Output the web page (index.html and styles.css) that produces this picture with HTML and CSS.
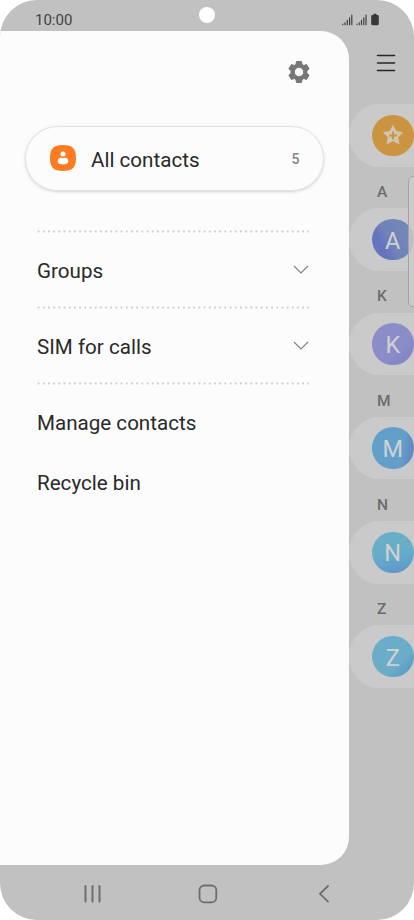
FILE: index.html
```html
<!DOCTYPE html>
<html lang="en">
<head>
<meta charset="utf-8">
<title>Contacts</title>
<link rel="stylesheet" href="styles.css">
</head>
<body>
<div class="phone">
  <header class="status">
    <span class="time">10:00</span>
    <span class="camera"></span>
    <svg class="signals" width="38" height="14" viewBox="0 0 38 14">
      <g stroke="#414141" stroke-width="1.2" stroke-linecap="round">
        <path d="M.8 11.2v.5M3 9.8v1.9M5.3 7.4v4.3M7.6 4.8v6.9M9.8 2v9.7"/>
        <path d="M15 11.2v.5M17.3 9.8v1.9M19.5 7.4v4.3M21.8 4.8v6.9M24 2v9.7"/>
      </g>
      <path fill="#383838" d="M31.500 .8h3v1.100h1.200q1.100 0 1.100 1.100v8.100q0 1.100-1.100 1.100h-5.400q-1.100 0-1.100-1.100V3q0-1.100 1.100-1.100H31.500z"/>
    </svg>
  </header>
  <main class="middle">
    <nav class="drawer">
      <div class="settings">
        <svg width="24" height="24" viewBox="0 0 24 24" fill="#777" fill-rule="evenodd"><path stroke="#777" stroke-width="1" stroke-linejoin="round" d="M9.500 1.500h5l.6 3 1.700 1 2.800-1 2.500 4.300-2.200 2v2.400l2.200 2-2.500 4.300-2.800-1-1.700 1-.6 3h-5l-.6-3-1.700-1-2.800 1-2.500-4.300 2.200-2v-2.400l-2.200-2 2.500-4.300 2.800 1 1.700-1zM12 7.300a4.700 4.700 0 1 0 0 9.400 4.700 4.700 0 0 0 0-9.400z"/></svg>
      </div>
      <div class="all">
        <svg width="26" height="26" viewBox="0 0 26 26"><path fill="#ff7b22" d="M13 0C22.500 0 26 3.500 26 13S22.500 26 13 26 0 22.500 0 13 3.500 0 13 0z"/><circle cx="13" cy="9" r="2.500" fill="#fff"/><path fill="#fff" d="M7.700 16.500c0-2 1.300-3.500 3-3.900q2.300 1.300 4.600 0c1.700.4 3 1.900 3 3.900 0 2-2.700 2.900-5.300 2.900s-5.300-.9-5.300-2.900z"/></svg>
        <span class="all-name">All contacts</span>
        <span class="count">5</span>
      </div>
      <div class="item ruled"><span>Groups</span><svg width="16" height="10" viewBox="0 0 16 10"><path d="M1 1l7 7 7-7" fill="none" stroke="#808080" stroke-width="1.100"/></svg></div>
      <div class="item ruled"><span>SIM for calls</span><svg width="16" height="10" viewBox="0 0 16 10"><path d="M1 1l7 7 7-7" fill="none" stroke="#808080" stroke-width="1.100"/></svg></div>
      <div class="item ruled"><span>Manage contacts</span></div>
      <div class="item last"><span>Recycle bin</span></div>
    </nav>
    <section class="rail">
      <svg class="menu" width="20" height="18" viewBox="0 0 20 18"><path d="M1.500 1.500h17M1.500 9h17M1.500 16.500h17" stroke="#262626" stroke-width="1.600" stroke-linecap="round"/></svg>
      <div class="card"><div class="avatar star"><svg width="22" height="22" viewBox="0 0 22 22"><path fill="#d0c5b1" stroke="#d0c5b1" stroke-linejoin="round" d="M11 1.500l2.900 6.100 6.600.9-4.800 4.600 1.200 6.700-5.900-3.200-5.900 3.200 1.200-6.700L1.500 8.500l6.600-.9z"/><path d="M11 7.500v8M7 11.500h8" stroke="#ca9440" stroke-width="1.900"/></svg></div></div>
      <div class="letter">A</div>
      <div class="card"><div class="avatar a">A</div></div>
      <div class="letter">K</div>
      <div class="card"><div class="avatar k">K</div></div>
      <div class="letter">M</div>
      <div class="card"><div class="avatar m">M</div></div>
      <div class="letter">N</div>
      <div class="card"><div class="avatar n">N</div></div>
      <div class="letter">Z</div>
      <div class="card"><div class="avatar z">Z</div></div>
      <div class="edge"></div>
    </section>
  </main>
  <footer class="navbar">
    <svg width="20" height="20" viewBox="0 0 20 20"><path d="M3.500 2v15.500M10.500 2v15.500M17.500 2v15.500" stroke="#6d6d6d" stroke-width="2" stroke-linecap="round"/></svg>
    <svg width="20" height="20" viewBox="0 0 20 20"><rect x="1.500" y="1.500" width="16.800" height="16.800" rx="4.800" fill="none" stroke="#6d6d6d" stroke-width="1.800"/></svg>
    <svg width="20" height="20" viewBox="0 0 20 20"><path d="M14 2L6 9.800l8 7.800" fill="none" stroke="#6d6d6d" stroke-width="1.800" stroke-linecap="round"/></svg>
  </footer>
</div>
</body>
</html>
```
FILE: styles.css
```css
* { box-sizing: border-box; }
body { margin: 0; background: #fff; font-family: Roboto, "Liberation Sans", sans-serif; }
svg { display: block; flex: none; }
.phone { width: 414px; height: 920px; border-radius: 37px; background: #c1c1c1; overflow: hidden; display: flex; flex-direction: column; }
.status { height: 30.5px; display: flex; flex: none; padding-left: 35px; color: #414141; }
.time { width: 164px; padding-top: 11px; font-size: 15px; line-height: 18px; }
.camera { width: 16px; height: 16px; margin-top: 7px; border-radius: 50%; background: #fff; }
.signals { margin: 12.500px 0 0 127px; }
.middle { height: 834px; display: flex; flex: none; }
.drawer { width: 349px; background: #fcfcfc; border-radius: 0 28px 28px 0; }
.settings { display: flex; justify-content: flex-end; padding: 29.500px 38.500px 0 0; }
.all { height: 65px; margin: 41.500px 25px 39.500px; padding: 0 23.500px 0 24px; border-radius: 33px; display: flex; align-items: center; border: 1px solid #e0e0e0; box-shadow: 0 1px 3px #0000002b; }
.all-name { margin-left: 15px; flex: 1; font-size: 20.600px; line-height: 26px; padding-top: 3px; color: #292929; }
.count { font-size: 14px; color: #858585; font-weight: 500; padding-top: 1px; }
.item { height: 76px; margin: 0 40px 0 37px; display: flex; align-items: center; justify-content: space-between; font-size: 20.600px; color: #292929; padding-top: 5.500px; }
.item svg { margin-bottom: 2px; }
.ruled { background: radial-gradient(circle, #c8c8c8 0.8px, #c8c8c800 1.300px) -1px 0 / 5.200px 3px repeat-x; }
.last { height: 44px; }
.rail { width: 65px; position: relative; }
.menu { margin: 23.500px 0 0 27px; }
.card { height: 62.500px; border-radius: 31px 0 0 31px; background: #cacaca; padding: 10.500px 0 0 23px; }
.menu + .card { margin-top: 32px; }
.avatar { width: 41.500px; height: 41.500px; border-radius: 50%; display: flex; align-items: center; justify-content: center; color: #d1d1d1; font-size: 23.500px; padding-top: 2px; }
.letter { height: 41.750px; padding: 5.700px 0 0 28px; line-height: 41px; font-size: 15.500px; font-weight: 500; color: #6c6c6c; }
.star { background: #ca9440; padding-top: 0; }
.a { background: linear-gradient(60deg, #6674c0 28%, #7082b9 45%, #748ab5); }
.k { background: linear-gradient(140deg, #8b8dc9 60%, #7d80c5); }
.m { background: linear-gradient(100deg, #62a0c9 68%, #6589c5 88%); }
.n { background: linear-gradient(170deg, #69aec7 45%, #61a6cb 70%, #638dce); }
.z { background: linear-gradient(135deg, #6badc8 65%, #609fc8 80%); }
.edge { position: absolute; right: -7px; top: 145px; width: 13px; height: 131px; border: 1px solid #a4a4a4; border-radius: 5px; background: #cbcbcbd0; }
.navbar { height: 55.500px; flex: none; display: flex; gap: 96px; padding: 19.500px 0 0 82px; }
```
